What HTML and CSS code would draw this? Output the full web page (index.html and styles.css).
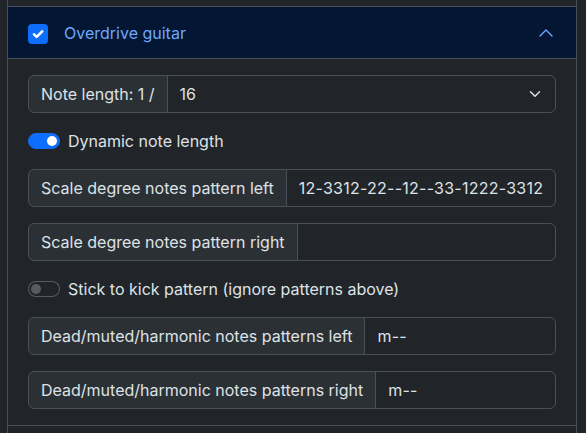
FILE: index.html
```html
<!DOCTYPE html>
<html lang="en">
<head>
<meta charset="utf-8">
<title>Overdrive guitar</title>
<link rel="stylesheet" href="styles.css">
</head>
<body>
<div class="accordion">
  <div class="acc-item acc-prev"></div>
  <div class="acc-item">
    <div class="acc-header">
      <span class="check">
        <svg width="20" height="20" viewBox="0 0 20 20"><path d="M6 10.3l2.6 2.6L14.2 7.3" fill="none" stroke="#fff" stroke-width="2.6" stroke-linecap="round" stroke-linejoin="round"/></svg>
      </span>
      <span class="acc-title">Overdrive guitar</span>
      <svg class="acc-chevron" width="16" height="16" viewBox="0 0 16 16"><path d="M2 11L8 5L14 11" fill="none" stroke="#6ea8fe" stroke-width="1.4" stroke-linecap="round" stroke-linejoin="round"/></svg>
    </div>
    <div class="acc-body">
      <div class="input-group">
        <span class="ig-text">Note length: 1 /</span>
        <div class="ig-select">
          <span>16</span>
          <svg width="16" height="12" viewBox="0 0 16 16"><path d="M2 5l6 6 6-6" fill="none" stroke="#dee2e6" stroke-width="2" stroke-linecap="round" stroke-linejoin="round"/></svg>
        </div>
      </div>
      <div class="form-switch">
        <span class="switch on"><span class="knob"></span></span>
        <span class="switch-label">Dynamic note length</span>
      </div>
      <div class="input-group">
        <span class="ig-text">Scale degree notes pattern left</span>
        <span class="ig-input wide">12-3312-22--12--33-1222-3312</span>
      </div>
      <div class="input-group">
        <span class="ig-text">Scale degree notes pattern right</span>
        <span class="ig-input"></span>
      </div>
      <div class="form-switch">
        <span class="switch"><span class="knob"></span></span>
        <span class="switch-label">Stick to kick pattern (ignore patterns above)</span>
      </div>
      <div class="input-group">
        <span class="ig-text">Dead/muted/harmonic notes patterns left</span>
        <span class="ig-input wide">m--</span>
      </div>
      <div class="input-group last">
        <span class="ig-text">Dead/muted/harmonic notes patterns right</span>
        <span class="ig-input wide">m--</span>
      </div>
    </div>
  </div>
  <div class="acc-item acc-next"></div>
</div>
</body>
</html>
```
FILE: styles.css
```css
* { box-sizing: border-box; }
html, body { margin: 0; background: #212529; }
body {
  font-family: Inter, "Noto Sans", sans-serif;
  font-size: 16px;
  line-height: 1.5;
  color: #dee2e6;
  height: 433px;
  overflow: hidden;
}
.accordion {
  margin-left: 7px;
  width: 570px;
  border-left: 1px solid #495057;
  border-right: 1px solid #495057;
  min-height: 433px;
}
.acc-item { border-top: 1px solid #495057; }
.acc-prev { border-top: 0; height: 6px; }
.acc-next { height: 20px; }
.acc-header {
  display: flex;
  align-items: center;
  height: 52px;
  padding: 0 20px;
  background: #031633;
  box-shadow: inset 0 -1px 0 #495057;
  color: #6ea8fe;
}
.check {
  width: 20px;
  height: 20px;
  border-radius: 4px;
  background: #0d6efd;
  display: flex;
  margin-top: 1px;
}
.acc-title { margin-left: 16px; }
.acc-chevron { margin-left: auto; margin-right: 2px; }
.acc-body { padding: 16px 20px; }
.input-group {
  display: flex;
  height: 38px;
  margin-bottom: 16px;
}
.input-group.last { margin-bottom: 0; }
.ig-text {
  display: flex;
  align-items: center;
  padding: 0 12px;
  background: #2b3035;
  border: 1px solid #495057;
  border-radius: 6px 0 0 6px;
  white-space: nowrap;
}
.ig-input, .ig-select {
  flex: 1;
  display: flex;
  align-items: center;
  margin-left: -1px;
  padding: 0 12px;
  border: 1px solid #495057;
  border-radius: 0 6px 6px 0;
  background: #212529;
  white-space: nowrap;
}
.ig-input.wide { letter-spacing: 0.25px; }
.ig-select { justify-content: space-between; }
.form-switch {
  display: flex;
  align-items: center;
  height: 24px;
  margin-bottom: 16px;
}
.switch {
  width: 32px;
  height: 16px;
  border-radius: 8px;
  border: 1px solid rgba(255,255,255,0.25);
  background: #212529;
  display: flex;
  align-items: center;
  padding: 0 2px;
}
.switch .knob {
  width: 10px;
  height: 10px;
  border-radius: 50%;
  background: rgba(255,255,255,0.25);
}
.switch.on {
  background: #0d6efd;
  border-color: #0d6efd;
  justify-content: flex-end;
}
.switch.on .knob { background: #fff; }
.switch-label { margin-left: 8px; }
```
